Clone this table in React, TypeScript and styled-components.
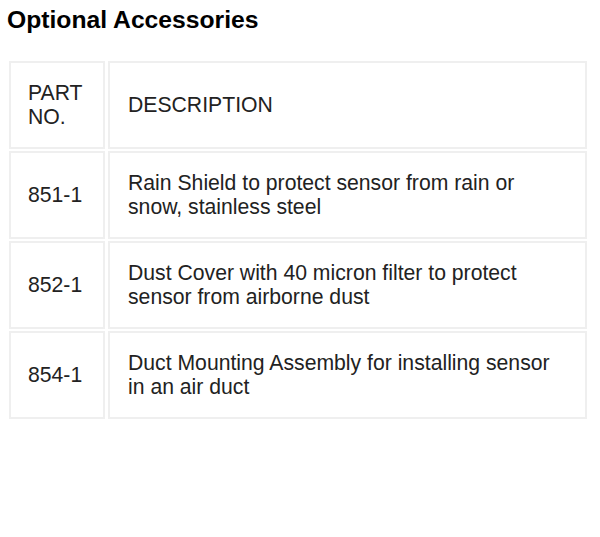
import React from "react";
import styled, { createGlobalStyle } from "styled-components";

const GlobalStyle = createGlobalStyle`
  html, body {
    margin: 0;
    padding: 0;
    background: #ffffff;
  }
  body {
    font-family: "Liberation Sans", Arial, sans-serif;
    color: #222222;
  }
`;

const Page = styled.div`
  padding: 6px 0 0 7px;
`;

const Title = styled.h2`
  margin: 0 0 25px 0;
  font-size: 24.7px;
  font-weight: 700;
  color: #000000;
  line-height: normal;
`;

const Table = styled.table`
  border-collapse: separate;
  border-spacing: 3px 2px;
  margin: 0 0 0 -1px;
  table-layout: fixed;
  width: 584px;
`;

const Col = styled.col<{ $w: number }>`
  width: ${(p) => p.$w}px;
`;

const Row = styled.tr`
  height: 88px;
`;

const HeadCell = styled.th<{ $padLeft: number }>`
  border: 2px solid #efefef;
  padding: 0 18px 0 ${(p) => p.$padLeft}px;
  font-size: 21.2px;
  font-weight: 400;
  text-align: left;
  vertical-align: middle;
  line-height: normal;
  color: #222222;
`;

const Cell = styled.td<{ $padLeft: number }>`
  border: 2px solid #efefef;
  padding: 0 20px 0 ${(p) => p.$padLeft}px;
  font-size: 21.2px;
  vertical-align: middle;
  line-height: normal;
  color: #222222;
`;

const rows = [
  { part: "851-1", desc: "Rain Shield to protect sensor from rain or snow, stainless steel" },
  { part: "852-1", desc: "Dust Cover with 40 micron filter to protect sensor from airborne dust" },
  { part: "854-1", desc: "Duct Mounting Assembly for installing sensor in an air duct" },
];

export default function App() {
  return (
    <>
      <GlobalStyle />
      <Page>
        <Title>Optional Accessories</Title>
        <Table>
          <colgroup>
            <Col $w={96} />
            <Col $w={479} />
          </colgroup>
          <thead>
            <Row>
              <HeadCell $padLeft={17}>PART NO.</HeadCell>
              <HeadCell $padLeft={18}>DESCRIPTION</HeadCell>
            </Row>
          </thead>
          <tbody>
            {rows.map((r) => (
              <Row key={r.part}>
                <Cell $padLeft={17}>{r.part}</Cell>
                <Cell $padLeft={18}>{r.desc}</Cell>
              </Row>
            ))}
          </tbody>
        </Table>
      </Page>
    </>
  );
}
